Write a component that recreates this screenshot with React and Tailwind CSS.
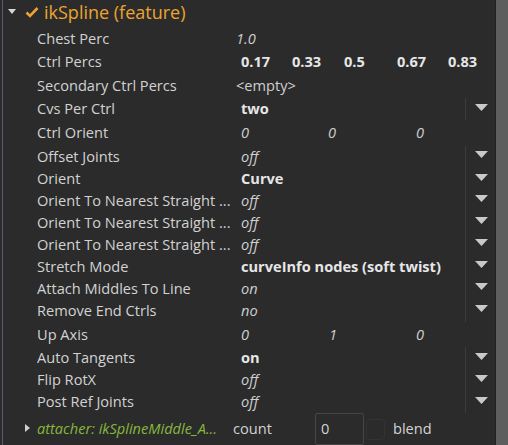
import React from "react";

const Arrow = () => (
  <svg width="13" height="7" viewBox="0 0 13 7" className="mb-[4px]">
    <polygon points="0,0 13,0 6.5,7" fill="#c9c9c9" />
  </svg>
);

// one attribute row
const Row = ({ label, className, children, combo }) => (
  <div className={`flex items-center ${className}`}>
    <div className="ml-[34px] w-[204px] shrink-0 whitespace-nowrap overflow-hidden text-[#d2d2d2]">{label}</div>
    <div className="relative w-[224px] shrink-0 self-stretch flex items-center">{children}</div>
    {combo ? (
      <>
        <div className="w-px self-stretch bg-[#3c3c3c]" />
        <div className="flex items-center ml-[9px]">
          <Arrow />
        </div>
      </>
    ) : null}
  </div>
);

const Bold = ({ children }) => <span className="font-bold text-[#e6e6e6]">{children}</span>;
const Ital = ({ children }) => <span className="italic text-[#cfcfcf]">{children}</span>;

export default function App() {
  return (
    <div className="w-[508px] h-[445px] bg-[#2b2b2b] flex overflow-hidden text-[14.6px] font-['Open_Sans',sans-serif]">
      <div className="flex-1 ml-[2px] border-l border-[#56606a] flex flex-col">
        {/* header */}
        <div className="h-[28px] shrink-0 flex items-center">
          <svg width="8" height="5" viewBox="0 0 8 5" className="ml-[5px] mb-[5px]">
            <polygon points="0,0 8,0 4,5" fill="#d6d6d6" />
          </svg>
          <svg width="14" height="11" viewBox="0 0 14 11" className="ml-[9px] mb-[4px]">
            <path d="M1.5 5.5 L5 9 L12.5 1" stroke="#eba430" strokeWidth="2.6" fill="none" />
          </svg>
          <span className="ml-[5px] mb-[4px] text-[18px] text-[#eba430] leading-none">ikSpline (feature)</span>
        </div>

        <Row label="Chest Perc" className="h-[23px]">
          <span className="ml-[-5px]">
            <Ital>1.0</Ital>
          </span>
        </Row>
        <Row label="Ctrl Percs" className="h-[24px]">
          <span className="absolute left-0"><Bold>0.17</Bold></span>
          <span className="absolute left-[51px]"><Bold>0.33</Bold></span>
          <span className="absolute left-[103px]"><Bold>0.5</Bold></span>
          <span className="absolute left-[156px]"><Bold>0.67</Bold></span>
          <span className="absolute left-[207px]"><Bold>0.83</Bold></span>
        </Row>
        <Row label="Secondary Ctrl Percs" className="h-[25px]">
          <span className="ml-[-5px] text-[#cfcfcf]">&lt;empty&gt;</span>
        </Row>
        <Row label="Cvs Per Ctrl" className="h-[22px]" combo>
          <Bold>two</Bold>
        </Row>
        <Row label="Ctrl Orient" className="h-[26px]">
          <span className="absolute left-0"><Ital>0</Ital></span>
          <span className="absolute left-[87px]"><Ital>0</Ital></span>
          <span className="absolute left-[175px]"><Ital>0</Ital></span>
        </Row>
        <Row label="Offset Joints" className="h-[23px]" combo>
          <Ital>off</Ital>
        </Row>
        <Row label="Orient" className="h-[22px]" combo>
          <Bold>Curve</Bold>
        </Row>
        <Row label="Orient To Nearest Straight ..." className="h-[22px]" combo>
          <Ital>off</Ital>
        </Row>
        <Row label="Orient To Nearest Straight ..." className="h-[22px]" combo>
          <Ital>off</Ital>
        </Row>
        <Row label="Orient To Nearest Straight ..." className="h-[22px]" combo>
          <Ital>off</Ital>
        </Row>
        <Row label="Stretch Mode" className="h-[22px]" combo>
          <Bold>curveInfo nodes (soft twist)</Bold>
        </Row>
        <Row label="Attach Middles To Line" className="h-[22px]" combo>
          <Ital>on</Ital>
        </Row>
        <Row label="Remove End Ctrls" className="h-[23px]" combo>
          <Ital>no</Ital>
        </Row>
        <Row label="Up Axis" className="h-[26px]">
          <span className="absolute left-0"><Ital>0</Ital></span>
          <span className="absolute left-[88px]"><Ital>1</Ital></span>
          <span className="absolute left-[175px]"><Ital>0</Ital></span>
        </Row>
        <Row label="Auto Tangents" className="h-[22px]" combo>
          <Bold>on</Bold>
        </Row>
        <Row label="Flip RotX" className="h-[22px]" combo>
          <Ital>off</Ital>
        </Row>
        <Row label="Post Ref Joints" className="h-[22px]" combo>
          <Ital>off</Ital>
        </Row>

        {/* attacher row */}
        <div className="h-[32px] shrink-0 flex items-center">
          <svg width="5" height="8" viewBox="0 0 5 8" className="ml-[22px] mb-[2px]">
            <polygon points="0,0 5,4 0,8" fill="#cfcfcf" />
          </svg>
          <div className="ml-[7px] w-[196px] shrink-0 whitespace-nowrap overflow-hidden italic text-[#86b83c]">
            attacher: ikSplineMiddle_A...
          </div>
          <div className="w-[82px] shrink-0 text-[#d2d2d2]">count</div>
          <div className="w-[49px] h-[32px] shrink-0 border border-[#464646] rounded-[2px] flex items-center pl-[5px] text-[#d2d2d2]">
            0
          </div>
          <div className="ml-[2px] w-[19px] h-[21px] shrink-0 border border-[#333333] rounded-[4px]" />
          <div className="ml-[8px] text-[#d2d2d2]">blend</div>
        </div>
      </div>
      <div className="w-[13px] shrink-0 border-l border-[#222222] bg-[#5e5e5e]" />
    </div>
  );
}
